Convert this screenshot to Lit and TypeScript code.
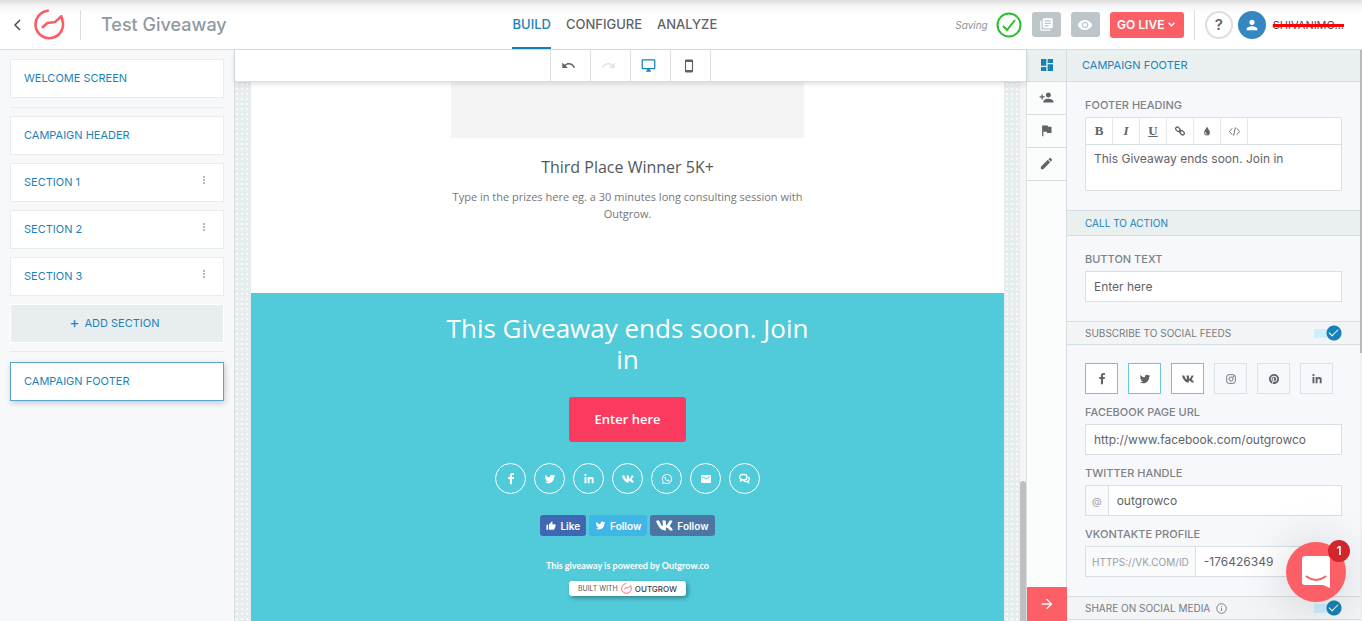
import { LitElement, html, css, svg } from "lit";
import { customElement, state } from "lit/decorators.js";
import { classMap } from "lit/directives/class-map.js";

type Glyph = { box: string; d: string };

const m = (d: string): Glyph => ({ box: "0 0 24 24", d });

const glyphs: Record<string, Glyph> = {
  undo: m("M12.5 8c-2.65 0-5.05.99-6.9 2.6L2 7v9h9l-3.62-3.62c1.39-1.16 3.16-1.88 5.12-1.88 3.54 0 6.55 2.31 7.6 5.5l2.37-.78C21.08 11.03 17.15 8 12.5 8z"),
  redo: m("M18.4 10.6C16.55 8.99 14.15 8 11.5 8c-4.65 0-8.58 3.03-9.96 7.22L3.9 16c1.05-3.19 4.05-5.5 7.6-5.5 1.95 0 3.73.72 5.12 1.88L13 16h9V7l-3.6 3.6z"),
  desktop: m("M21 2H3c-1.1 0-2 .9-2 2v12c0 1.1.9 2 2 2h7v2H8v2h8v-2h-2v-2h7c1.1 0 2-.9 2-2V4c0-1.1-.9-2-2-2zm0 14H3V4h18v12z"),
  phone: m("M17 1.01L7 1c-1.1 0-1.99.9-1.99 2v18c0 1.1.89 2 1.99 2h10c1.1 0 2-.9 2-2V3c0-1.1-.9-1.99-2-1.99zM17 19H7V5h10v14z"),
  dashboard: m("M3 13h8V3H3v10zm0 8h8v-6H3v6zm10 0h8V11h-8v10zm0-18v6h8V3h-8z"),
  personAdd: m("M15 12c2.21 0 4-1.79 4-4s-1.79-4-4-4-4 1.79-4 4 1.79 4 4 4zm-9-2V7H4v3H1v2h3v3h2v-3h3v-2H6zm9 4c-2.67 0-8 1.34-8 4v2h16v-2c0-2.66-5.33-4-8-4z"),
  flag: m("M14.4 6L14 4H5v17h2v-7h5.6l.4 2h7V6z"),
  edit: m("M3 17.25V21h3.75L17.81 9.94l-3.75-3.75L3 17.25zM20.71 7.04c.39-.39.39-1.02 0-1.41l-2.34-2.34c-.39-.39-1.02-.39-1.41 0l-1.83 1.83 3.75 3.75 1.83-1.83z"),
  books: m("M4 6H2v14c0 1.1.9 2 2 2h14v-2H4V6zm16-4H8c-1.1 0-2 .9-2 2v12c0 1.1.9 2 2 2h12c1.1 0 2-.9 2-2V4c0-1.1-.9-2-2-2zm-1 9H9V9h10v2zm-4 4H9v-2h6v2zm4-8H9V5h10v2z"),
  eye: m("M12 4.5C7 4.5 2.73 7.61 1 12c1.73 4.39 6 7.5 11 7.5s9.27-3.11 11-7.5c-1.73-4.39-6-7.5-11-7.5zM12 17c-2.76 0-5-2.24-5-5s2.24-5 5-5 5 2.24 5 5-2.24 5-5 5zm0-8c-1.66 0-3 1.34-3 3s1.34 3 3 3 3-1.34 3-3-1.34-3-3-3z"),
  person: m("M12 12c2.21 0 4-1.79 4-4s-1.79-4-4-4-4 1.79-4 4 1.79 4 4 4zm0 2c-2.67 0-8 1.34-8 4v2h16v-2c0-2.66-5.33-4-8-4z"),
  forward: m("M12 4l-1.41 1.41L16.17 11H4v2h12.17l-5.58 5.59L12 20l8-8z"),
  mail: m("M20 4H4c-1.1 0-1.99.9-1.99 2L2 18c0 1.1.9 2 2 2h16c1.1 0 2-.9 2-2V6c0-1.1-.9-2-2-2zm0 4l-8 5-8-5V6l8 5 8-5v2z"),
  thumb: m("M1 21h4V9H1v12zm22-11c0-1.1-.9-2-2-2h-6.31l.95-4.57.03-.32c0-.41-.17-.79-.44-1.06L14.17 1 7.59 7.59C7.22 7.95 7 8.45 7 9v10c0 1.1.9 2 2 2h9c.83 0 1.54-.5 1.84-1.22l3.02-7.05c.09-.23.14-.47.14-.73v-2z"),
  chevronDown: m("M3 9l2.8-2.8L12 12.4l6.2-6.2L21 9l-9 9z"),
  drop: m("M12 1C10.500 6.500 5 10 5 15.500a7 7 0 0 0 14 0C19 10 13.500 6.500 12 1zM8 14.500c.6 0 1 .4 1 1 0 1.700 1.300 3 3 3 .6 0 1 .4 1 1s-.4 1-1 1a5 5 0 0 1-5-5c0-.6.4-1 1-1z"),
  facebook: { box: "0 0 1792 1792", d: "M1343 12v264h-157q-86 0-116 36t-30 108v189h293l-39 296h-254v759h-306v-759h-255v-296h255v-218q0-186 104-288.5t277-102.5q147 0 228 12z" },
  twitter: { box: "0 0 1792 1792", d: "M1684 408q-67 98-162 167 1 14 1 42 0 130-38 259.500t-115.500 248.500-184.500 210.500-258 146-323 54.500q-271 0-496-145 35 4 78 4 225 0 401-138-105-2-188-64.500t-114-159.500q33 5 61 5 43 0 85-11-112-23-185.500-111.500t-73.500-205.500v-4q68 38 146 41-66-44-105-115t-39-154q0-88 44-163 121 149 294.500 238.500t371.500 99.500q-8-38-8-74 0-134 94.500-228.500t228.500-94.500q140 0 236 102 109-21 205-78-37 115-142 178 93-10 186-50z" },
  linkedin: { box: "-16 0 480 480", d: "M100.28 448H7.4V148.9h92.88zM53.79 108.1C24.09 108.1 0 83.5 0 53.8a53.79 53.79 0 0 1 107.58 0c0 29.7-24.1 54.3-53.79 54.3zM447.9 448h-92.68V302.4c0-34.7-.7-79.2-48.29-79.2-48.29 0-55.69 37.7-55.69 76.7V448h-92.78V148.9h89.08v40.8h1.3c12.4-23.5 42.69-48.3 87.88-48.3 94 0 111.28 61.9 111.28 142.3V448z" },
  vk: { box: "10 0 556 512", d: "M545 117.7c3.7-12.5 0-21.7-17.8-21.7h-58.9c-15 0-21.9 7.9-25.6 16.7 0 0-30 73.1-72.4 120.5-13.7 13.7-20 18.1-27.5 18.1-3.7 0-9.4-4.4-9.4-16.9V117.7c0-15-4.2-21.7-16.6-21.7h-92.6c-9.4 0-15 7-15 13.5 0 14.2 21.2 17.5 23.4 57.5v86.8c0 19-3.4 22.5-10.9 22.5-20 0-68.6-73.4-97.4-157.4-5.8-16.3-11.5-22.9-26.6-22.9H38.8c-16.8 0-20.2 7.9-20.2 16.7 0 15.6 20 93.1 93.1 195.5C160.4 378.1 229 416 291.4 416c37.5 0 42.1-8.4 42.1-22.9 0-66.8-3.4-73.1 15.4-73.1 8.7 0 23.7 4.4 58.7 38.1 40 40 46.6 57.9 69 57.9h58.9c16.8 0 25.3-8.4 20.4-25-11.2-34.9-86.9-106.7-90.3-111.5-8.7-11.2-6.2-16.2 0-26.2.1-.1 72-101.3 79.400-135.600z" },
  whatsapp: { box: "0 32 448 448", d: "M380.9 97.1C339 55.1 283.2 32 223.9 32c-122.4 0-222 99.6-222 222 0 39.1 10.2 77.3 29.6 111L0 480l117.7-30.9c32.4 17.7 68.9 27 106.1 27h.1c122.3 0 224.1-99.6 224.1-222 0-59.3-25.2-115-67.1-157zm-157 341.6c-33.2 0-65.7-8.9-94-25.7l-6.7-4-69.8 18.3L72 359.2l-4.4-7c-18.5-29.4-28.2-63.3-28.2-98.2 0-101.7 82.8-184.5 184.6-184.5 49.3 0 95.6 19.2 130.4 54.1 34.8 34.9 56.2 81.2 56.1 130.5 0 101.8-84.9 184.6-186.6 184.6zm101.2-138.2c-5.5-2.8-32.8-16.2-37.9-18-5.1-1.9-8.8-2.8-12.5 2.8-3.7 5.6-14.3 18-17.6 21.8-3.2 3.7-6.5 4.2-12 1.4-32.6-16.3-54-29.1-75.5-66-5.7-9.8 5.7-9.1 16.3-30.3 1.8-3.7.9-6.9-.5-9.7-1.4-2.8-12.5-30.1-17.1-41.2-4.5-10.8-9.1-9.3-12.5-9.5-3.2-.2-6.9-.2-10.6-.2-3.7 0-9.7 1.4-14.8 6.9-5.1 5.6-19.4 19-19.4 46.3 0 27.3 19.9 53.7 22.6 57.4 2.8 3.7 39.1 59.7 94.8 83.8 35.2 15.2 49 16.5 66.6 13.9 10.7-1.6 32.8-13.4 37.4-26.4 4.6-13 4.6-24.1 3.2-26.4-1.3-2.5-5-3.9-10.5-6.6z" },
  pinterest: { box: "0 8 496 496", d: "M496 256c0 137-111 248-248 248-25.6 0-50.2-3.9-73.4-11.1 10.1-16.5 25.2-43.5 30.8-65 3-11.6 15.4-59 15.4-59 8.1 15.4 31.7 28.5 56.8 28.5 74.8 0 128.7-68.8 128.7-154.3 0-81.9-66.9-143.2-152.9-143.2-107 0-163.9 71.8-163.9 150.1 0 36.4 19.4 81.7 50.3 96.1 4.7 2.2 7.2 1.2 8.3-3.3.8-3.4 5-20.3 6.9-28.1.6-2.5.3-4.7-1.7-7.1-10.1-12.5-18.3-35.3-18.3-56.6 0-54.7 41.4-107.6 112-107.6 60.9 0 103.6 41.5 103.6 100.9 0 67.1-33.9 113.6-78 113.6-24.3 0-42.6-20.1-36.7-44.8 7-29.5 20.5-61.3 20.5-82.6 0-19-10.2-34.900-31.400-34.900-24.900 0-44.900 25.700-44.900 60.200 0 22 7.400 36.800 7.400 36.800s-24.500 103.800-29 123.200c-5 21.400-3 51.600-.9 71.200C65.400 450.900 0 361.100 0 256 0 119 111 8 248 8s248 111 248 248z" },
};

const icon = (name: string, size: number) => html`<svg
  width=${size} height=${size} viewBox=${glyphs[name].box} fill="currentColor" aria-hidden="true"
>${svg`<path d=${glyphs[name].d}></path>`}</svg>`;

const strokeIcons: Record<string, unknown> = {
  instagram: svg`<rect x="1.500" y="1.500" width="21" height="21" rx="6"></rect><circle cx="12" cy="12" r="5"></circle><circle cx="18" cy="6" r="1"></circle>`,
  link: svg`<rect x="1" y="4" width="12" height="8" rx="4" transform="rotate(45 7 8)"></rect><rect x="11" y="12" width="12" height="8" rx="4" transform="rotate(45 17 16)"></rect><path d="M9 10l6 5"></path>`,
  code: svg`<path d="M7 5L1 12l6 7M17 5l6 7-6 7M14 3l-4 18"></path>`,
  back: svg`<path d="M16 2l-10 10 10 10"></path>`,
  chat: svg`<path d="M9.500 3C4.800 3 1.500 5.500 1.500 9c0 2 1.200 3.800 3 4.900L3.500 17l4-2 2 .2c4.700 0 8-2.700 8-6.200s-3.300-6-8-6z"></path><path d="M20 9c1.500 1 2.500 2.500 2.500 4.200 0 1.800-1 3.300-2.500 4.300l1 3-4-2c-3 .5-5.500-.3-7-1.500"></path>`,
  info: svg`<circle cx="12" cy="12" r="10.500"></circle><path d="M12 10.500v7M12 6.500v2"></path>`,
};

const lineIcon = (name: string, size: number, width = 2) => html`<svg
  width=${size} height=${size} viewBox="0 0 24 24" fill="none" stroke="currentColor"
  stroke-width=${width} aria-hidden="true">${strokeIcons[name]}</svg>`;

const logo = (size: number) => html`<svg width=${size} height=${size} viewBox="0 0 30 30"
  fill="none" stroke="#fc5c65" stroke-width="2.500" stroke-linecap="round" stroke-linejoin="round" aria-hidden="true">
  <path d="M13.500 1.700A13.300 13.300 0 1 0 27.500 11L26.500 7 20.500 12.500 13 13.500 8.500 17.500"></path></svg>`;

const base = css`
  * { box-sizing: border-box; }
  :host { font-family: Inter, "Open Sans", sans-serif; color: #5f6368; }
  button, input, textarea { font: inherit; color: inherit; margin: 0; }
  button { padding: 0; border: 0; background: none; cursor: pointer; }
  a { color: inherit; text-decoration: none; }
  h1, h2, h3, p { margin: 0; font-weight: inherit; }
  svg { display: block; flex: none; }
`;

@customElement("builder-header")
class BuilderHeader extends LitElement {
  static styles = [base, css`
    :host { display: block; }
    .bar {
      display: grid; grid-template-columns: minmax(0, 31fr) auto minmax(0, 39fr);
      height: 50px; background: linear-gradient(#dedede, #f5f5f5 6px, #fff 14px);
      border-bottom: 1px solid #d7dfe2;
    }
    .brand, .tools { display: flex; align-items: center; }
    .brand { padding-left: 12px; }
    .back { display: flex; color: #4a4f54; margin-right: 10px; }
    .rule { width: 1px; height: 30px; background: #d9e0e3; }
    .brand .rule { margin: 0 20px 0 15px; }
    .title { font-size: 18px; font-weight: 500; color: #8f999f; white-space: nowrap; }
    .tabs { display: flex; gap: 15px; font-size: 13px; font-weight: 500; }
    .tab { display: flex; align-items: center; border-bottom: 2px solid transparent; }
    .tab.on { color: #1782b8; border-color: #1782b8; }
    .tools { justify-content: flex-end; gap: 10px; padding-right: 18px; }
    .saving { font-size: 10px; font-style: italic; color: #8f9498; }
    .sq {
      display: grid; place-items: center; width: 29px; height: 25px;
      border-radius: 3px; background: #bcc5ca; color: #fff;
    }
    .live {
      display: flex; align-items: center; justify-content: center; gap: 3px;
      width: 74px; height: 26px; border-radius: 3px;
      background: #fc5f66; color: #fff; font-size: 12px; font-weight: 600;
    }
    .user { display: flex; align-items: center; gap: 5px; }
    .round { display: grid; place-items: center; width: 28px; height: 28px; border-radius: 50%; }
    .help { border: 2px solid #dedede; font-size: 15px; font-weight: 600; background: #fff; }
    .avatar { background: #3587c1; color: #fff; }
    .name { padding-left: 2px; font-size: 11px; color: #4c5054; }
    .name s { text-decoration: line-through 3px #f00; }
    .status { display: flex; align-items: center; gap: 8px; }
  `];

  render() {
    return html`<header class="bar">
      <div class="brand">
        <button class="back" aria-label="Back">${lineIcon("back", 12, 3)}</button>
        ${logo(31)}
        <span class="rule"></span>
        <h1 class="title">Test Giveaway</h1>
      </div>
      <nav class="tabs">
        <a class="tab on" href="#build">BUILD</a>
        <a class="tab" href="#configure">CONFIGURE</a>
        <a class="tab" href="#analyze">ANALYZE</a>
      </nav>
      <div class="tools">
        <div class="status">
          <span class="saving">Saving</span>
          <svg width="26" height="26" viewBox="0 0 26 26" fill="none" stroke="#2bbd2b" stroke-width="2" aria-hidden="true">
            <circle cx="13" cy="13" r="11.500"></circle><path d="M7 14l4 4 8-10"></path>
          </svg>
        </div>
        <button class="sq" aria-label="Templates">${icon("books", 15)}</button>
        <button class="sq" aria-label="Preview">${icon("eye", 16)}</button>
        <button class="live">GO LIVE ${icon("chevronDown", 9)}</button>
        <span class="rule"></span>
        <div class="user">
          <button class="round help" aria-label="Help">?</button>
          <button class="round avatar" aria-label="Account">${icon("person", 16)}</button>
          <span class="name"><s>SHIVANIMO...</s></span>
        </div>
      </div>
    </header>`;
  }
}

@customElement("section-list")
class SectionList extends LitElement {
  static styles = [base, css`
    :host { display: block; background: #f6f8fa; border-right: 1px solid #d7dfe2; }
    .list { display: flex; flex-direction: column; gap: 8px; padding: 9px 10px; }
    .item {
      display: flex; align-items: center; justify-content: space-between;
      height: 39px; padding: 0 18px 1px 13px; background: #fff; border: 1px solid #e7ecee;
      color: #1b83b9; font-size: 11px; text-align: left;
    }
    .item.on { border-color: #5aa5cb; box-shadow: 1px 2px 6px rgba(0, 0, 0, 0.2); margin-top: 2px; }
    .add { justify-content: center; gap: 5px; background: #e8edef; border-color: #fff; }
    .plus { font-size: 15px; line-height: 12px; }
    .split { width: 100%; height: 1px; margin: 0; border: 0; background: #e7ecee; }
    .split.first { margin-top: 1px; }
    .dots { display: grid; gap: 1px; padding-bottom: 4px; }
    .dots i { width: 2px; height: 2px; background: #b4babd; }
  `];

  private row(label: string, menu = false) {
    return html`<button class="item">${label}
      ${menu ? html`<span class="dots"><i></i><i></i><i></i></span>` : ""}</button>`;
  }

  render() {
    return html`<nav class="list">
      ${this.row("WELCOME SCREEN")}
      <hr class="split first" />
      ${this.row("CAMPAIGN HEADER")}
      ${["SECTION 1", "SECTION 2", "SECTION 3"].map((s) => this.row(s, true))}
      <button class="item add"><span class="plus">+</span>ADD SECTION</button>
      <hr class="split" />
      <button class="item on">CAMPAIGN FOOTER</button>
    </nav>`;
  }
}

@customElement("builder-canvas")
class BuilderCanvas extends LitElement {
  static styles = [base, css`
    :host { display: flex; flex-direction: column; min-width: 0; min-height: 0; }
    .views {
      display: flex; justify-content: center; height: 32px; background: #fff;
      border-bottom: 1px solid #d7dfe2; box-shadow: 0 2px 5px rgba(0, 0, 0, 0.12); z-index: 1;
    }
    .view { display: grid; place-items: center; width: 40px; padding-right: 4px; border-right: 1px solid #d9e1e4; }
    .view:first-child { width: 41px; border-left: 1px solid #d9e1e4; }
    .view.on { color: #1782b8; }
    .view:disabled { color: #dfe4e7; }
    .stage { display: flex; flex: 1; min-height: 0; background: #f4f4f4; }
    .backdrop {
      flex: 1; display: flex; flex-direction: column; min-width: 0; padding: 0 16px; overflow: hidden;
      background: radial-gradient(circle at 2px 2px, #f8fafa 1px, transparent 1px) 0 0 / 5px 5px #e7ecef;
    }
    .track { display: flex; flex-direction: column; justify-content: flex-end; width: 6px; }
    .thumb { height: 26%; background: #bfbfbf; border-radius: 3px 3px 0 0; }
    .prize {
      display: flex; flex-direction: column; align-items: center; padding-bottom: 71px;
      background: #fff; text-align: center; font-family: "Open Sans", sans-serif;
    }
    .photo { width: 100%; max-width: 353px; height: 56px; background: #f4f4f4; }
    .prize h2 { margin: 18px 0 10px; font-size: 16px; line-height: 22px; color: #55585a; }
    .prize p { max-width: 353px; font-size: 11px; line-height: 17px; color: #777; }
    .footer {
      display: flex; flex: 1; flex-direction: column; align-items: center; padding-top: 20px;
      background: #51cbd9; color: #fff; text-align: center; font-family: "Open Sans", sans-serif;
    }
    .footer h2 { max-width: 384px; font-size: 26px; line-height: 31px; font-weight: 500; }
    .enter {
      width: 117px; height: 45px; margin: 22px 0 21px; padding-bottom: 2px; border-radius: 3px;
      background: #fb3a60; font-size: 13px; font-weight: 600;
    }
    .share { display: flex; gap: 8px; }
    .share a {
      display: grid; place-items: center; width: 31px; height: 31px;
      border: 1px solid #fff; border-radius: 50%;
    }
    .follow { display: flex; gap: 3px; margin: 21px 0 23px; font-size: 10px; font-weight: 600; font-family: Inter, sans-serif; }
    .follow a { display: flex; align-items: center; justify-content: center; gap: 4px; height: 21px; padding: 0 6px; border-radius: 3px; }
    .fb { background: #4267b2; }
    .tw { background: #3fb5e8; }
    .vk { background: #4c75a3; }
    .powered { font-family: Lato, sans-serif; font-size: 9px; line-height: 14px; font-weight: 700; }
    .badge {
      display: flex; align-items: center; gap: 3px; height: 15px; margin-top: 8px; padding: 0 9px;
      background: #fff; border-radius: 3px; box-shadow: 2px 2px 4px rgba(0, 0, 0, 0.35);
      color: #55585a; font-family: Inter, sans-serif; font-size: 7px;
    }
    .badge b { font-size: 8px; font-weight: 500; color: #3d4043; }
  `];

  render() {
    const share = ["facebook", "twitter", "linkedin", "vk", "whatsapp", "mail"];
    return html`
      <div class="views">
        <button class="view" aria-label="Undo">${icon("undo", 15)}</button>
        <button class="view" aria-label="Redo" disabled>${icon("redo", 15)}</button>
        <button class="view on" aria-label="Desktop view">${icon("desktop", 15)}</button>
        <button class="view" aria-label="Mobile view">${icon("phone", 14)}</button>
      </div>
      <div class="stage">
        <main class="backdrop">
          <section class="prize">
            <div class="photo"></div>
            <h2>Third Place Winner 5K+</h2>
            <p>Type in the prizes here eg. a 30 minutes long consulting session with Outgrow.</p>
          </section>
          <section class="footer">
            <h2>This Giveaway ends soon. Join in</h2>
            <button class="enter">Enter here</button>
            <div class="share">
              ${share.map((n) => html`<a href="#${n}" aria-label=${n}>${icon(n, n === "linkedin" || n === "whatsapp" ? 10 : 12)}</a>`)}
              <a href="#chat" aria-label="chat">${lineIcon("chat", 11, 3)}</a>
            </div>
            <div class="follow">
              <a class="fb" href="#like">${icon("thumb", 10)}Like</a>
              <a class="tw" href="#follow-twitter">${icon("twitter", 11)}Follow</a>
              <a class="vk" href="#follow-vk">${icon("vk", 17)}Follow</a>
            </div>
            <p class="powered">This giveaway is powered by Outgrow.co</p>
            <a class="badge" href="#outgrow">BUILT WITH ${logo(11)}<b>OUTGROW</b></a>
          </section>
        </main>
        <div class="track"><div class="thumb"></div></div>
      </div>`;
  }
}

@customElement("settings-panel")
class SettingsPanel extends LitElement {
  @state() private feeds = ["facebook", "twitter", "vk"];

  static styles = [base, css`
    :host { display: flex; min-height: 0; border-left: 1px solid #d7dfe2; }
    .rail {
      display: flex; flex-direction: column; width: 40px;
      background: #fbfdfd; border-right: 1px solid #d5dee1;
    }
    .rail button { display: grid; place-items: center; height: 33px; padding-bottom: 1px; border-bottom: 1px solid #d5dee1; }
    .rail .on { height: 32px; background: #eaeff0; color: #1782b8; }
    .rail .next { height: 34px; width: 40px; margin-top: auto; border: 0; background: #fc5f66; color: #fff; }
    .panel { flex: 1; min-width: 0; overflow: hidden; background: #f6f8fb; }
    .scroll { width: 2px; background: #f1f1f1; }
    .scroll div { height: 53%; background: #b9b9b9; }
    .bar {
      display: flex; align-items: center; justify-content: space-between; height: 26px; padding: 0 18px;
      background: #eaeff0; border: solid #d5dee1; border-width: 1px 0; color: #1b83b9; font-size: 10px;
    }
    .bar.top { height: 32px; padding: 0 15px 1px; border-top: 0; font-size: 11px; }
    .bar.soft { height: 24px; background: #f2f4f6; color: #777b7e; }
    .bar span { display: flex; align-items: center; gap: 6px; }
    .group { display: flex; flex-direction: column; padding: 15px 18px 19px; }
    .group.feeds { padding-top: 18px; }
    .label { margin-bottom: 4px; font-size: 11px; line-height: 16px; font-weight: 500; color: #7e8285; }
    .feeds .label { margin-top: 10px; }
    .field, .editor { border: 1px solid #d9e0e3; background: #fff; }
    .field { display: flex; height: 31px; }
    .field input { flex: 1; min-width: 0; padding: 0 8px; border: 0; background: none; font-size: 12px; outline: 0; }
    .field span {
      display: flex; align-items: center; padding: 0 6px; background: #f8fafc;
      border-right: 1px solid #d9e0e3; color: #9ba0a3; font-size: 10px;
    }
    .editor { border-radius: 2px; height: 74px; }
    .marks { display: flex; height: 27px; border-bottom: 1px solid #d9e0e3; font-family: "Liberation Serif", serif; font-size: 13px; }
    .marks button { display: grid; place-items: center; width: 27px; border-right: 1px solid #e3e8ea; }
    .bold { font-weight: 700; }
    .italic { font-style: italic; font-weight: 700; }
    .under { text-decoration: underline; font-weight: 700; }
    textarea { display: block; width: 100%; height: 44px; padding: 5px 8px; border: 0; resize: none; background: none; font-size: 12px; line-height: 18px; outline: 0; }
    .nets { display: flex; gap: 10px; }
    .nets button { display: grid; place-items: center; width: 33px; height: 31px; border: 1px solid #dbe2e5; }
    .nets .on { border-color: #66c8e0; background: #fff; }
    .toggle { display: flex; align-items: center; width: 28px; height: 16px; }
    .toggle input {
      appearance: none; display: flex; align-items: center; justify-content: flex-end;
      width: 28px; height: 16px; cursor: pointer;
      background: radial-gradient(circle at 20px 8px, #1782b8 7px, transparent 8px),
        linear-gradient(#cdeefc, #cdeefc) 0 4px / 20px 9px no-repeat;
    }
    .toggle input::before {
      content: ""; width: 8px; height: 4px; margin: 0 4px 3px 0;
      border: solid #fff; border-width: 0 0 1px 1px; transform: rotate(-45deg);
    }
  `];

  private toggle(label: string) {
    return html`<label class="toggle"><input type="checkbox" aria-label=${label} checked /></label>`;
  }

  private flip(name: string) {
    this.feeds = this.feeds.includes(name) ? this.feeds.filter((n) => n !== name) : [...this.feeds, name];
  }

  render() {
    const nets = ["facebook", "twitter", "vk", "instagram", "pinterest", "linkedin"];
    return html`
      <nav class="rail">
        <button class="on" aria-label="Layout">${icon("dashboard", 16)}</button>
        <button aria-label="Leads">${icon("personAdd", 15)}</button>
        <button aria-label="Outcomes">${icon("flag", 15)}</button>
        <button aria-label="Design">${icon("edit", 15)}</button>
        <button class="next" aria-label="Next">${icon("forward", 16)}</button>
      </nav>
      <aside class="panel">
        <h2 class="bar top">CAMPAIGN FOOTER</h2>
        <div class="group">
          <label class="label" for="heading">FOOTER HEADING</label>
          <div class="editor">
            <div class="marks">
              <button class="bold" aria-label="Bold">B</button>
              <button class="italic" aria-label="Italic">I</button>
              <button class="under" aria-label="Underline">U</button>
              <button aria-label="Link">${lineIcon("link", 10, 3)}</button>
              <button aria-label="Colour">${icon("drop", 10)}</button>
              <button aria-label="Code">${lineIcon("code", 11, 2)}</button>
            </div>
            <textarea id="heading" .value=${"This Giveaway ends soon. Join in"}></textarea>
          </div>
        </div>
        <h2 class="bar">CALL TO ACTION</h2>
        <div class="group">
          <label class="label" for="cta">BUTTON TEXT</label>
          <div class="field"><input id="cta" value="Enter here" /></div>
        </div>
        <div class="bar soft"><span>SUBSCRIBE TO SOCIAL FEEDS</span>${this.toggle("Subscribe to social feeds")}</div>
        <div class="group feeds">
          <div class="nets">
            ${nets.map((n) => html`<button class=${classMap({ on: this.feeds.includes(n) })}
              aria-label=${n} @click=${() => this.flip(n)}>
              ${n === "instagram" ? lineIcon(n, 10, 2) : icon(n, n === "pinterest" || n === "linkedin" ? 10 : 12)}</button>`)}
          </div>
          <label class="label" for="fb">FACEBOOK PAGE URL</label>
          <div class="field"><input id="fb" value="http://www.facebook.com/outgrowco" /></div>
          <label class="label" for="tw">TWITTER HANDLE</label>
          <div class="field"><span>@</span><input id="tw" value="outgrowco" /></div>
          <label class="label" for="vk">VKONTAKTE PROFILE</label>
          <div class="field"><span>HTTPS://VK.COM/ID</span><input id="vk" value="-176426349" /></div>
        </div>
        <div class="bar soft"><span>SHARE ON SOCIAL MEDIA ${lineIcon("info", 11, 2)}</span>${this.toggle("Share on social media")}</div>
      </aside>
      <div class="scroll"><div></div></div>`;
  }
}

@customElement("app-root")
class AppRoot extends LitElement {
  static styles = [base, css`
    :host { display: flex; flex-direction: column; height: 100vh; overflow: hidden; }
    .work { flex: 1; min-height: 0; display: grid; grid-template: minmax(0, 1fr) / 235px minmax(0, 1fr) 336px; }
    .chat {
      position: fixed; right: 16px; bottom: 19px; display: grid; place-items: center;
      width: 60px; height: 60px; border-radius: 50%; background: #fc5f66; color: #fff;
      box-shadow: 0 2px 50px rgba(0, 0, 0, 0.18);
    }
    .count {
      position: absolute; top: -2px; right: -4px; width: 22px; height: 22px; border-radius: 50%;
      background: #d0262c; font-size: 12px; line-height: 22px; font-weight: 600;
    }
  `];

  render() {
    return html`
      <builder-header></builder-header>
      <div class="work">
        <section-list></section-list>
        <builder-canvas></builder-canvas>
        <settings-panel></settings-panel>
      </div>
      <button class="chat" aria-label="Open chat">
        <svg width="28" height="32" viewBox="0 0 28 32" aria-hidden="true">
          <path fill="#fff" d="M3 0h22a3 3 0 0 1 3 3v29l-7-3H3a3 3 0 0 1-3-3V3a3 3 0 0 1 3-3z"></path>
          <path fill="none" stroke="#fc5f66" stroke-width="2" stroke-linecap="round" d="M4.500 20.500q9.500 7 19 0"></path>
        </svg>
        <span class="count">1</span>
      </button>`;
  }
}
